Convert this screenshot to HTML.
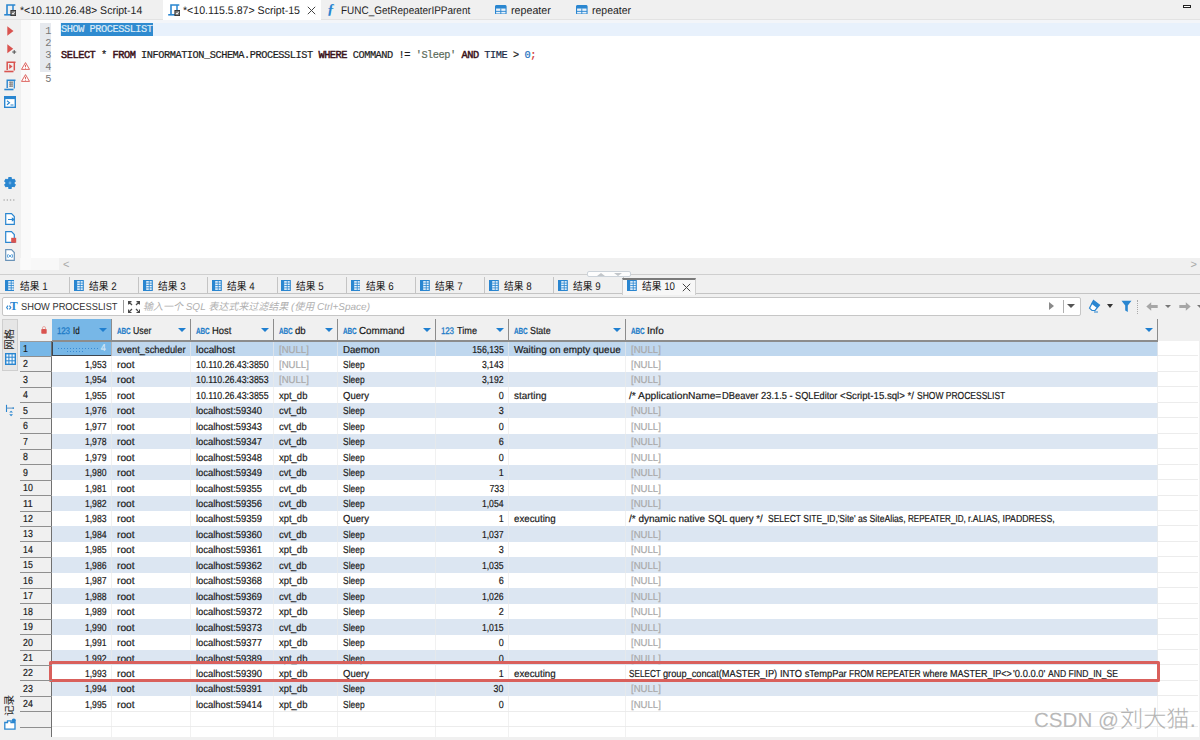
<!DOCTYPE html>
<html lang="zh"><head>
<meta charset="utf-8">
<title>DBeaver - SHOW PROCESSLIST</title>
<style>
*{box-sizing:border-box;margin:0;padding:0}
html,body{width:1200px;height:740px;overflow:hidden;background:#f0f0f0}
body{position:relative;font-family:"Liberation Sans","Noto Sans CJK SC",sans-serif;font-size:9.6px;color:#1a1a1a;letter-spacing:0}
.abs{position:absolute}
/* ---------- top editor tabs ---------- */
#tabs{position:absolute;left:0;top:0;width:1200px;height:20px;background:#f0f0f0;border-bottom:1px solid #e3e3e3}
#tabs .tab{position:absolute;top:0;height:20px;line-height:20px;font-size:11px;white-space:nowrap;color:#222}
#tabs .active{background:#fff;left:163px;width:158px}
#tabs .tab span.tx{position:absolute;top:0}
/* ---------- editor ---------- */
#editor{position:absolute;left:0;top:20px;width:1200px;height:238px;background:#fff}
#ltool{position:absolute;left:0;top:0;width:21px;height:255px;background:#f0f0f0}
#curline{position:absolute;left:60px;top:0;width:1140px;height:16px;background:#f3f5f9}
#curline2{position:absolute;left:60px;top:3px;width:1140px;height:13px;background:#e8f1fc}
#lngut{position:absolute;left:40px;top:3px;width:11px;height:49px;background:#e6e9ee}
.ln{position:absolute;left:40px;width:11px;text-align:right;font-family:"Liberation Mono",monospace;font-size:10.3px;letter-spacing:-0.5px;color:#787878;height:12px;line-height:12px}
.code{position:absolute;left:61px;height:12px;line-height:12px;-webkit-text-stroke:0.2px;font-family:"Liberation Mono",monospace;font-size:10.3px;letter-spacing:-0.46px;white-space:pre;color:#1c1c1c}
.kw{color:#3a1018;-webkit-text-stroke:0.45px #3a1018}
.kw2{color:#1a2a48}
.selbg{background:#2f8bd0;color:#dbeaf7;display:inline-block;height:12.7px}
.str{color:#5a6a5a}
.numc{color:#1b6fc0}
.semi{color:#d03030}
/* ---------- h-scroll + sash ---------- */
#hscroll{position:absolute;left:59.2px;top:258px;width:1141px;height:14px;background:#f0f0f0}
#hs-l{position:absolute;left:20.4px;top:258px;width:38.8px;height:12px;background:#f8f8f8}
.chev{position:absolute;font-size:11px;color:#a8a8a8;line-height:14px;letter-spacing:0}
#sashline{position:absolute;left:0;top:273.7px;width:1200px;height:1px;background:#cfcfcf}
/* ---------- result tabs ---------- */
#rtabs{position:absolute;left:0;top:275px;width:1200px;height:19.3px;background:#f0f0f0;border-bottom:1px solid #c4c4c4}
.rt{position:absolute;top:0.7px;height:19px;line-height:20px;font-size:11px;white-space:nowrap;color:#1a1a1a}
.rsep{position:absolute;top:2px;width:1px;height:15.5px;background:#c4c4c4}
/* ---------- filter bar ---------- */
#filter{position:absolute;left:2px;top:296.6px;width:1079px;height:19.4px;background:#fff;border:1px solid #c6c6c6;border-radius:2px}
/* ---------- grid ---------- */
#grid{position:absolute;left:0;top:0;width:1200px;height:740px;pointer-events:none}
.hc{position:absolute;top:318.5px;height:22.5px;background:#f0f0f0;border-right:1px solid #8c8c8c;border-bottom:1px solid #8c8c8c;line-height:24.2px;white-space:nowrap;font-size:10.2px;-webkit-text-stroke:0.2px}
.hc.sel{background:#77b7e7}
.hc .hn{position:absolute;left:21.8px;top:0}
.t123,.tabc{position:absolute;left:5.2px;top:0;color:#1f7cc8;font-size:9.6px;letter-spacing:-0.3px;-webkit-text-stroke:0.3px #1f7cc8}
.tabc{font-size:8.8px;font-weight:bold;letter-spacing:-0.2px;-webkit-text-stroke:0.2px #1f7cc8;top:0.3px}
.dd{position:absolute;right:4px;top:9.3px;width:0;height:0;border-left:4px solid transparent;border-right:4px solid transparent;border-top:4.6px solid #1f7fd0}
.row{position:absolute;left:0;width:1157.5px;height:15.45px}
.row.odd::before,.row.rsel::before{content:"";position:absolute;left:51.5px;top:0;width:1106px;height:15.45px;background:#dce6f2}
.row.rsel::before{background:#bfd7ee}
.rn{position:absolute;left:20px;width:31.5px;height:15.45px;padding-left:3px;line-height:16.5px;background:#f0f0f0;font-size:10.2px;-webkit-text-stroke:0.2px}
.rn::after{content:"";position:absolute;z-index:1;left:0;bottom:-0.6px;width:31.5px;height:1px;background:#8f8f8f}
.rsel .rn{background:#77b7e7}
.c{position:absolute;top:0.5px;height:15.45px;line-height:15.45px;padding:0 5px 0 5px;white-space:nowrap;font-size:10.2px;-webkit-text-stroke:0.2px}
.c.num{text-align:right;padding-right:5px}
.c.null{color:#a9a9a9}
.c.focus{top:0;background:#77b7e7;border:1.5px solid #3c4650;color:#d8e8f5;line-height:12px}
.vt{transform-origin:0 0;transform:rotate(-90deg);font-size:10.6px;line-height:11px;white-space:nowrap;color:#222;letter-spacing:0}
.dots{position:absolute;left:5px;top:6px;width:42px;height:1px;background:repeating-linear-gradient(90deg,#3a8bd4 0 1px,transparent 1px 3px)}
.dots::after{content:"";position:absolute;left:9px;top:2.5px;width:17px;height:1px;background:repeating-linear-gradient(90deg,#3a8bd4 0 1px,transparent 1px 3px)}
.ck{position:absolute;top:0;white-space:pre}
</style>
</head>
<body>
<div id="tabs">
<div class="tab active"></div>
<span class="tab tx" style="left: 19.6px; transform: scaleX(0.9583) rotate(0.03deg); transform-origin: 0px 50%;">*&lt;10.110.26.48&gt; Script-14</span>
<span class="tab tx" style="left: 183px; transform: scaleX(0.963) rotate(0.03deg); transform-origin: 0px 50%;">*&lt;10.115.5.87&gt; Script-15</span>
<span class="tab tx" style="left: 340.8px; transform: scaleX(0.907) rotate(0.03deg); transform-origin: 0px 50%;">FUNC_GetRepeaterIPParent</span>
<span class="tab tx" style="left: 510.7px; transform: scaleX(0.9711) rotate(0.03deg); transform-origin: 0px 50%;">repeater</span>
<span class="tab tx" style="left: 591.7px; transform: scaleX(0.9516) rotate(0.03deg); transform-origin: 0px 50%;">repeater</span>
<svg class="abs" style="left:4px;top:4px" width="12" height="12" viewBox="0 0 12 12"><path d="M3 10V1H11.3" stroke="#2a86d0" stroke-width="1.6" fill="none"></path><path d="M0.2 10.8H7" stroke="#2a86d0" stroke-width="1.6" fill="none"></path><path d="M9 1V6" stroke="#2a86d0" stroke-width="1.5" fill="none"></path><rect x="6.9" y="6.5" width="4.8" height="5.1" fill="#7a7a7a" stroke="#2e2e2e" stroke-width="0.9"></rect><path d="M8 9l1 1.2 1.7-2.4" stroke="#fff" stroke-width="0.9" fill="none"></path></svg>
<svg class="abs" style="left:168px;top:4px" width="12" height="12" viewBox="0 0 12 12"><path d="M3 10V1H11.3" stroke="#2a86d0" stroke-width="1.6" fill="none"></path><path d="M0.2 10.8H7" stroke="#2a86d0" stroke-width="1.6" fill="none"></path><path d="M9 1V6" stroke="#2a86d0" stroke-width="1.5" fill="none"></path><rect x="6.9" y="6.5" width="4.8" height="5.1" fill="#7a7a7a" stroke="#2e2e2e" stroke-width="0.9"></rect><path d="M8 9l1 1.2 1.7-2.4" stroke="#fff" stroke-width="0.9" fill="none"></path></svg>
<svg class="abs" style="left:306.5px;top:6px" width="9" height="9" viewBox="0 0 9 9"><path d="M0.8 0.8L8.2 8.2M8.2 0.8L0.8 8.2" stroke="#444" stroke-width="1" fill="none"></path></svg>
<span class="abs" style="left:327px;top:1px;font:italic bold 15px 'Liberation Serif',serif;color:#2a86d0;letter-spacing:0;line-height:16px">ƒ</span>
<svg class="abs" style="left:495.3px;top:4.5px" width="11.6" height="9.8" viewBox="0 0 13 10" preserveAspectRatio="none"><rect x="0.6" y="0.6" width="11.8" height="8.8" rx="1" fill="#e8f2fb" stroke="#2a86d0" stroke-width="1.2"></rect><rect x="0.6" y="0.6" width="11.8" height="3" fill="#2a86d0"></rect><path d="M6.5 3.5V9.4M0.6 6.5H12.4" stroke="#2a86d0" stroke-width="1"></path></svg>
<svg class="abs" style="left:576.3px;top:4.5px" width="11.6" height="9.8" viewBox="0 0 13 10" preserveAspectRatio="none"><rect x="0.6" y="0.6" width="11.8" height="8.8" rx="1" fill="#e8f2fb" stroke="#2a86d0" stroke-width="1.2"></rect><rect x="0.6" y="0.6" width="11.8" height="3" fill="#2a86d0"></rect><path d="M6.5 3.5V9.4M0.6 6.5H12.4" stroke="#2a86d0" stroke-width="1"></path></svg>
<div class="abs" style="left:1183px;top:4.8px;width:8px;height:3.2px;border:1px solid #222;background:#fff"></div>
</div>
<div id="editor">
<div id="curline"></div><div id="curline2"></div>
<div id="ltool"></div>
<div id="lngut"></div>
<div class="ln" style="top:4.5px">1</div>
<div class="ln" style="top:16.6px">2</div>
<div class="ln" style="top:28.7px">3</div>
<div class="ln" style="top:40.8px">4</div>
<div class="ln" style="top:52.9px">5</div>
<div class="code" style="top:3.2px"><span class="selbg">SHOW PROCESSLIST</span></div>
<div class="code" style="top:28.7px"><span class="kw">SELECT</span> * <span class="kw">FROM</span> INFORMATION_SCHEMA.PROCESSLIST <span class="kw">WHERE</span> COMMAND != <span class="str">'Sleep'</span> <span class="kw">AND</span> <span class="kw2">TIME</span> &gt; <span class="numc">0</span><span class="semi">;</span></div>
</div>
<div id="hs-l"></div><div id="hscroll"></div>
<span class="chev" style="left:63px;top:256.5px">&lt;</span>
<span class="chev" style="left:1190.5px;top:256.5px">&gt;</span>
<div id="sashline"></div>
<div id="rtabs">
<svg class="abs" style="left:4.6px;top:5px" width="9.8" height="11" viewBox="0 0 11 12" preserveAspectRatio="none"><rect x="0.6" y="0.6" width="9.8" height="10.8" fill="#eaf3fb" stroke="#2a86d0" stroke-width="1.2"></rect><rect x="0.6" y="0.6" width="3" height="10.8" fill="#2a86d0"></rect><path d="M7 0.6V11.4M3.6 3.4H10.4M3.6 6H10.4M3.6 8.6H10.4" stroke="#2a86d0" stroke-width="0.9"></path></svg>
<span class="rt" style="left: 19.5px; transform: scaleX(0.885) rotate(0.03deg); transform-origin: 0px 50%;">结果 1</span>
<div class="rsep" style="left:68.9px"></div>
<svg class="abs" style="left:73.8px;top:5px" width="9.8" height="11" viewBox="0 0 11 12" preserveAspectRatio="none"><rect x="0.6" y="0.6" width="9.8" height="10.8" fill="#eaf3fb" stroke="#2a86d0" stroke-width="1.2"></rect><rect x="0.6" y="0.6" width="3" height="10.8" fill="#2a86d0"></rect><path d="M7 0.6V11.4M3.6 3.4H10.4M3.6 6H10.4M3.6 8.6H10.4" stroke="#2a86d0" stroke-width="0.9"></path></svg>
<span class="rt" style="left: 88.7px; transform: scaleX(0.885) rotate(0.03deg); transform-origin: 0px 50%;">结果 2</span>
<div class="rsep" style="left:138.1px"></div>
<svg class="abs" style="left:143.0px;top:5px" width="9.8" height="11" viewBox="0 0 11 12" preserveAspectRatio="none"><rect x="0.6" y="0.6" width="9.8" height="10.8" fill="#eaf3fb" stroke="#2a86d0" stroke-width="1.2"></rect><rect x="0.6" y="0.6" width="3" height="10.8" fill="#2a86d0"></rect><path d="M7 0.6V11.4M3.6 3.4H10.4M3.6 6H10.4M3.6 8.6H10.4" stroke="#2a86d0" stroke-width="0.9"></path></svg>
<span class="rt" style="left: 157.9px; transform: scaleX(0.885) rotate(0.03deg); transform-origin: 0px 50%;">结果 3</span>
<div class="rsep" style="left:207.3px"></div>
<svg class="abs" style="left:212.20000000000002px;top:5px" width="9.8" height="11" viewBox="0 0 11 12" preserveAspectRatio="none"><rect x="0.6" y="0.6" width="9.8" height="10.8" fill="#eaf3fb" stroke="#2a86d0" stroke-width="1.2"></rect><rect x="0.6" y="0.6" width="3" height="10.8" fill="#2a86d0"></rect><path d="M7 0.6V11.4M3.6 3.4H10.4M3.6 6H10.4M3.6 8.6H10.4" stroke="#2a86d0" stroke-width="0.9"></path></svg>
<span class="rt" style="left: 227.1px; transform: scaleX(0.885) rotate(0.03deg); transform-origin: 0px 50%;">结果 4</span>
<div class="rsep" style="left:276.5px"></div>
<svg class="abs" style="left:281.40000000000003px;top:5px" width="9.8" height="11" viewBox="0 0 11 12" preserveAspectRatio="none"><rect x="0.6" y="0.6" width="9.8" height="10.8" fill="#eaf3fb" stroke="#2a86d0" stroke-width="1.2"></rect><rect x="0.6" y="0.6" width="3" height="10.8" fill="#2a86d0"></rect><path d="M7 0.6V11.4M3.6 3.4H10.4M3.6 6H10.4M3.6 8.6H10.4" stroke="#2a86d0" stroke-width="0.9"></path></svg>
<span class="rt" style="left: 296.3px; transform: scaleX(0.885) rotate(0.03deg); transform-origin: 0px 50%;">结果 5</span>
<div class="rsep" style="left:345.7px"></div>
<svg class="abs" style="left:350.6px;top:5px" width="9.8" height="11" viewBox="0 0 11 12" preserveAspectRatio="none"><rect x="0.6" y="0.6" width="9.8" height="10.8" fill="#eaf3fb" stroke="#2a86d0" stroke-width="1.2"></rect><rect x="0.6" y="0.6" width="3" height="10.8" fill="#2a86d0"></rect><path d="M7 0.6V11.4M3.6 3.4H10.4M3.6 6H10.4M3.6 8.6H10.4" stroke="#2a86d0" stroke-width="0.9"></path></svg>
<span class="rt" style="left: 365.5px; transform: scaleX(0.885) rotate(0.03deg); transform-origin: 0px 50%;">结果 6</span>
<div class="rsep" style="left:414.9px"></div>
<svg class="abs" style="left:419.80000000000007px;top:5px" width="9.8" height="11" viewBox="0 0 11 12" preserveAspectRatio="none"><rect x="0.6" y="0.6" width="9.8" height="10.8" fill="#eaf3fb" stroke="#2a86d0" stroke-width="1.2"></rect><rect x="0.6" y="0.6" width="3" height="10.8" fill="#2a86d0"></rect><path d="M7 0.6V11.4M3.6 3.4H10.4M3.6 6H10.4M3.6 8.6H10.4" stroke="#2a86d0" stroke-width="0.9"></path></svg>
<span class="rt" style="left: 434.7px; transform: scaleX(0.885) rotate(0.03deg); transform-origin: 0px 50%;">结果 7</span>
<div class="rsep" style="left:484.1px"></div>
<svg class="abs" style="left:489.00000000000006px;top:5px" width="9.8" height="11" viewBox="0 0 11 12" preserveAspectRatio="none"><rect x="0.6" y="0.6" width="9.8" height="10.8" fill="#eaf3fb" stroke="#2a86d0" stroke-width="1.2"></rect><rect x="0.6" y="0.6" width="3" height="10.8" fill="#2a86d0"></rect><path d="M7 0.6V11.4M3.6 3.4H10.4M3.6 6H10.4M3.6 8.6H10.4" stroke="#2a86d0" stroke-width="0.9"></path></svg>
<span class="rt" style="left: 503.9px; transform: scaleX(0.885) rotate(0.03deg); transform-origin: 0px 50%;">结果 8</span>
<div class="rsep" style="left:553.3000000000001px"></div>
<svg class="abs" style="left:558.2px;top:5px" width="9.8" height="11" viewBox="0 0 11 12" preserveAspectRatio="none"><rect x="0.6" y="0.6" width="9.8" height="10.8" fill="#eaf3fb" stroke="#2a86d0" stroke-width="1.2"></rect><rect x="0.6" y="0.6" width="3" height="10.8" fill="#2a86d0"></rect><path d="M7 0.6V11.4M3.6 3.4H10.4M3.6 6H10.4M3.6 8.6H10.4" stroke="#2a86d0" stroke-width="0.9"></path></svg>
<span class="rt" style="left: 573.1px; transform: scaleX(0.885) rotate(0.03deg); transform-origin: 0px 50%;">结果 9</span>
<div class="rsep" style="left:622.5000000000001px"></div>
<div class="abs" style="left:622.3000000000001px;top:2.5px;width:73.5px;height:17.5px;background:#f7f7f7;border:1px solid #cfcfcf;border-top:2px solid #7a7a7a;border-bottom:none"></div>
<svg class="abs" style="left:627.4000000000001px;top:5px" width="9.8" height="11" viewBox="0 0 11 12" preserveAspectRatio="none"><rect x="0.6" y="0.6" width="9.8" height="10.8" fill="#eaf3fb" stroke="#2a86d0" stroke-width="1.2"></rect><rect x="0.6" y="0.6" width="3" height="10.8" fill="#2a86d0"></rect><path d="M7 0.6V11.4M3.6 3.4H10.4M3.6 6H10.4M3.6 8.6H10.4" stroke="#2a86d0" stroke-width="0.9"></path></svg>
<span class="rt" style="left: 642.3px; transform: scaleX(0.8848) rotate(0.03deg); transform-origin: 0px 50%;">结果 10</span>
<svg class="abs" style="left:682px;top:7.5px" width="9" height="9" viewBox="0 0 9 9"><path d="M0.8 0.8L8.2 8.2M8.2 0.8L0.8 8.2" stroke="#444" stroke-width="1" fill="none"></path></svg>
</div>
<div class="abs" style="left:586.7px;top:271px;width:44px;height:6px;background:#fdfdfd;border:1px solid #ccd3da;border-radius:2px"></div>
<svg class="abs" style="left:595px;top:272px" width="30" height="5" viewBox="0 0 30 5"><path d="M2 4L6 1L10 4ZM19 1L23 4L27 1Z" fill="#c2c6ca"></path></svg>
<div id="filter"></div>
<svg class="abs" style="left:5.6px;top:304.8px" width="6" height="5" viewBox="0 0 6 5"><path d="M2 0.6L0.6 2.5L2 4.4M3.4 0.6L4.8 2.5L3.4 4.4" stroke="#2a86d0" stroke-width="1.1" fill="none"></path></svg>
<span class="abs" style="left:10.3px;top:298.6px;font:bold 12.5px 'Liberation Serif',serif;color:#2a86d0;line-height:15px;letter-spacing:0;transform:scaleX(0.92);transform-origin:0 0">T</span>
<span class="abs ftxt" style="left: 20.5px; top: 297.5px; line-height: 18px; font-size: 10.2px; color: rgb(51, 51, 51); white-space: nowrap; transform: scaleX(0.9116) rotate(0.03deg); transform-origin: 0px 50%;">SHOW PROCESSLIST</span>
<div class="abs" style="left:123px;top:300px;width:1px;height:13px;background:#9a9a9a"></div>
<svg class="abs" style="left:127.5px;top:300.5px" width="12" height="12" viewBox="0 0 12 12"><path d="M0.5 3.5V0.5H3.5M8.5 0.5H11.5V3.5M11.5 8.5V11.5H8.5M3.5 11.5H0.5V8.5M0.5 0.5L4 4M11.5 0.5L8 4M11.5 11.5L8 8M0.5 11.5L4 8" stroke="#4a4a4a" stroke-width="1.25" fill="none"></path></svg>
<span class="abs" style="left: 143px; top: 297.5px; line-height: 18px; font-size: 10px; font-style: italic; color: rgb(176, 176, 176); white-space: nowrap; transform: scaleX(0.9984) rotate(0.03deg); transform-origin: 0px 50%;">输入一个 SQL 表达式来过滤结果 (使用 Ctrl+Space)</span>
<div class="abs" style="left:1049px;top:301.5px;width:0;height:0;border-top:4.5px solid transparent;border-bottom:4.5px solid transparent;border-left:5px solid #8a8a8a"></div>
<div class="abs" style="left:1062.5px;top:300px;width:1px;height:13px;background:#b0b0b0"></div>
<div class="abs" style="left:1066.5px;top:304px;width:0;height:0;border-left:4px solid transparent;border-right:4px solid transparent;border-top:4.5px solid #555"></div>
<svg class="abs" style="left:1088px;top:299px" width="13" height="14" viewBox="0 0 13 14"><path d="M5.5 1.5L11.5 6L7 11.5H4L1.5 9.2Z" fill="#fff" stroke="#2a86d0" stroke-width="1.2"></path><path d="M5.5 1.5L11.5 6L9 9L3.2 4.5Z" fill="#2a86d0"></path><path d="M6 13H10" stroke="#2a86d0" stroke-width="1"></path></svg>
<div class="abs" style="left:1107px;top:304px;width:0;height:0;border-left:3.5px solid transparent;border-right:3.5px solid transparent;border-top:4px solid #333"></div>
<svg class="abs" style="left:1120.5px;top:299.5px" width="11" height="13" viewBox="0 0 11 13"><path d="M0.5 0.8H10.5L6.8 5.5V12L4.2 10.5V5.5Z" fill="#2a86d0"></path></svg>
<div class="abs" style="left:1136.5px;top:300px;width:1px;height:14px;border-left:1px dotted #aaa"></div>
<svg class="abs" style="left:1146px;top:301.5px" width="12" height="9" viewBox="0 0 12 9"><path d="M0.3 4.5L5.2 0.3V3H11.7V6H5.2V8.7Z" fill="#a6a6a6"></path></svg>
<div class="abs" style="left:1164.5px;top:304.5px;width:0;height:0;border-left:3px solid transparent;border-right:3px solid transparent;border-top:3.5px solid #777"></div>
<svg class="abs" style="left:1179px;top:301.5px" width="12" height="9" viewBox="0 0 12 9"><path d="M11.7 4.5L6.8 0.3V3H0.3V6H6.8V8.7Z" fill="#a6a6a6"></path></svg>
<div class="abs" style="left:1196.5px;top:304.5px;width:0;height:0;border-left:3px solid transparent;border-right:3px solid transparent;border-top:3.5px solid #777"></div>
<div id="grid">
<div class="abs" style="left:20px;top:318.5px;width:1180px;height:23px;background:#f0f0f0"></div>
<div class="abs" style="left:51.5px;top:340.5px;width:1147px;height:396.5px;background:#fff"></div>
<div class="abs" style="left:20px;top:340.5px;width:31.5px;height:396.5px;background:#f0f0f0"></div>
<div class="hc sel" style="left:51.5px;width:60.0px"><span class="t123" style="transform: scaleX(0.8339) rotate(0.03deg); transform-origin: 0px 50%;">123</span><span class="hn" style="transform: scaleX(0.7882) rotate(0.03deg); transform-origin: 0px 50%;">Id</span><i class="dd"></i></div>
<div class="hc" style="left:111.5px;width:79.0px"><span class="tabc" style="transform: scaleX(0.7255) rotate(0.03deg); transform-origin: 0px 50%;">ABC</span><span class="hn" style="transform: scaleX(0.8552) rotate(0.03deg); transform-origin: 0px 50%;">User</span><i class="dd"></i></div>
<div class="hc" style="left:190.5px;width:83.0px"><span class="tabc" style="transform: scaleX(0.7255) rotate(0.03deg); transform-origin: 0px 50%;">ABC</span><span class="hn" style="transform: scaleX(0.9259) rotate(0.03deg); transform-origin: 0px 50%;">Host</span><i class="dd"></i></div>
<div class="hc" style="left:273.5px;width:64.0px"><span class="tabc" style="transform: scaleX(0.7255) rotate(0.03deg); transform-origin: 0px 50%;">ABC</span><span class="hn" style="transform: scaleX(0.9433) rotate(0.03deg); transform-origin: 0px 50%;">db</span><i class="dd"></i></div>
<div class="hc" style="left:337.5px;width:98.0px"><span class="tabc" style="transform: scaleX(0.7255) rotate(0.03deg); transform-origin: 0px 50%;">ABC</span><span class="hn" style="transform: scaleX(0.9681) rotate(0.03deg); transform-origin: 0px 50%;">Command</span><i class="dd"></i></div>
<div class="hc" style="left:435.5px;width:73.0px"><span class="t123" style="transform: scaleX(0.8339) rotate(0.03deg); transform-origin: 0px 50%;">123</span><span class="hn" style="transform: scaleX(0.8982) rotate(0.03deg); transform-origin: 0px 50%;">Time</span><i class="dd"></i></div>
<div class="hc" style="left:508.5px;width:117.0px"><span class="tabc" style="transform: scaleX(0.7255) rotate(0.03deg); transform-origin: 0px 50%;">ABC</span><span class="hn" style="transform: scaleX(0.8699) rotate(0.03deg); transform-origin: 0px 50%;">State</span><i class="dd"></i></div>
<div class="hc" style="left:625.5px;width:532.0px"><span class="tabc" style="transform: scaleX(0.7255) rotate(0.03deg); transform-origin: 0px 50%;">ABC</span><span class="hn" style="transform: scaleX(0.9824) rotate(0.03deg); transform-origin: 0px 50%;">Info</span><i class="dd"></i></div>
<div class="row rsel" style="top:341.0px">
<span class="rn"><span style="display: inline-block; transform: scaleX(0.8639) rotate(0.03deg); transform-origin: 0px 50%;">1</span></span>
<span class="c num focus" style="left:51.5px;width:60.0px"><i class="dots"></i><span style="display: inline-block; transform: scaleX(0.8815) rotate(0.03deg); transform-origin: 100% 50%;">4</span></span>
<span class="c" style="left:111.5px;width:79.0px"><span style="display: inline-block; transform: scaleX(0.9162) rotate(0.03deg); transform-origin: 0px 50%;">event_scheduler</span></span>
<span class="c" style="left:190.5px;width:83.0px"><span style="display: inline-block; transform: scaleX(0.9697) rotate(0.03deg); transform-origin: 0px 50%;">localhost</span></span>
<span class="c null" style="left:273.5px;width:64.0px"><span style="display: inline-block; transform: scaleX(0.9395) rotate(0.03deg); transform-origin: 0px 50%;">[NULL]</span></span>
<span class="c" style="left:337.5px;width:98.0px"><span style="display: inline-block; transform: scaleX(0.9503) rotate(0.03deg); transform-origin: 0px 50%;">Daemon</span></span>
<span class="c num" style="left:435.5px;width:73.0px"><span style="display: inline-block; transform: scaleX(0.858) rotate(0.03deg); transform-origin: 100% 50%;">156,135</span></span>
<span class="c" style="left:508.5px;width:117.0px"><span style="display: inline-block; transform: scaleX(0.9744) rotate(0.03deg); transform-origin: 0px 50%;">Waiting on empty queue</span></span>
<span class="c null" style="left:625.5px;width:532.0px"><span style="display: inline-block; transform: scaleX(0.9395) rotate(0.03deg); transform-origin: 0px 50%;">[NULL]</span></span>
</div>
<div class="row" style="top:356.45px">
<span class="rn"><span style="display: inline-block; transform: scaleX(0.8639) rotate(0.03deg); transform-origin: 0px 50%;">2</span></span>
<span class="c num" style="left:51.5px;width:60.0px"><span style="display: inline-block; transform: scaleX(0.8471) rotate(0.03deg); transform-origin: 100% 50%;">1,953</span></span>
<span class="c" style="left:111.5px;width:79.0px"><span style="display: inline-block; transform: scaleX(0.9964) rotate(0.03deg); transform-origin: 0px 50%;">root</span></span>
<span class="c" style="left:190.5px;width:83.0px"><span style="display: inline-block; transform: scaleX(0.8619) rotate(0.03deg); transform-origin: 0px 50%;">10.110.26.43:3850</span></span>
<span class="c null" style="left:273.5px;width:64.0px"><span style="display: inline-block; transform: scaleX(0.9395) rotate(0.03deg); transform-origin: 0px 50%;">[NULL]</span></span>
<span class="c" style="left:337.5px;width:98.0px"><span style="display: inline-block; transform: scaleX(0.8288) rotate(0.03deg); transform-origin: 0px 50%;">Sleep</span></span>
<span class="c num" style="left:435.5px;width:73.0px"><span style="display: inline-block; transform: scaleX(0.8471) rotate(0.03deg); transform-origin: 100% 50%;">3,143</span></span>
<span class="c" style="left:508.5px;width:117.0px"></span>
<span class="c null" style="left:625.5px;width:532.0px"><span style="display: inline-block; transform: scaleX(0.9395) rotate(0.03deg); transform-origin: 0px 50%;">[NULL]</span></span>
</div>
<div class="row odd" style="top:371.9px">
<span class="rn"><span style="display: inline-block; transform: scaleX(0.8639) rotate(0.03deg); transform-origin: 0px 50%;">3</span></span>
<span class="c num" style="left:51.5px;width:60.0px"><span style="display: inline-block; transform: scaleX(0.8471) rotate(0.03deg); transform-origin: 100% 50%;">1,954</span></span>
<span class="c" style="left:111.5px;width:79.0px"><span style="display: inline-block; transform: scaleX(0.9964) rotate(0.03deg); transform-origin: 0px 50%;">root</span></span>
<span class="c" style="left:190.5px;width:83.0px"><span style="display: inline-block; transform: scaleX(0.8619) rotate(0.03deg); transform-origin: 0px 50%;">10.110.26.43:3853</span></span>
<span class="c null" style="left:273.5px;width:64.0px"><span style="display: inline-block; transform: scaleX(0.9395) rotate(0.03deg); transform-origin: 0px 50%;">[NULL]</span></span>
<span class="c" style="left:337.5px;width:98.0px"><span style="display: inline-block; transform: scaleX(0.8288) rotate(0.03deg); transform-origin: 0px 50%;">Sleep</span></span>
<span class="c num" style="left:435.5px;width:73.0px"><span style="display: inline-block; transform: scaleX(0.8471) rotate(0.03deg); transform-origin: 100% 50%;">3,192</span></span>
<span class="c" style="left:508.5px;width:117.0px"></span>
<span class="c null" style="left:625.5px;width:532.0px"><span style="display: inline-block; transform: scaleX(0.9395) rotate(0.03deg); transform-origin: 0px 50%;">[NULL]</span></span>
</div>
<div class="row" style="top:387.35px">
<span class="rn"><span style="display: inline-block; transform: scaleX(0.8639) rotate(0.03deg); transform-origin: 0px 50%;">4</span></span>
<span class="c num" style="left:51.5px;width:60.0px"><span style="display: inline-block; transform: scaleX(0.8471) rotate(0.03deg); transform-origin: 100% 50%;">1,955</span></span>
<span class="c" style="left:111.5px;width:79.0px"><span style="display: inline-block; transform: scaleX(0.9964) rotate(0.03deg); transform-origin: 0px 50%;">root</span></span>
<span class="c" style="left:190.5px;width:83.0px"><span style="display: inline-block; transform: scaleX(0.8619) rotate(0.03deg); transform-origin: 0px 50%;">10.110.26.43:3855</span></span>
<span class="c" style="left:273.5px;width:64.0px"><span style="display: inline-block; transform: scaleX(0.9283) rotate(0.03deg); transform-origin: 0px 50%;">xpt_db</span></span>
<span class="c" style="left:337.5px;width:98.0px"><span style="display: inline-block; transform: scaleX(0.9369) rotate(0.03deg); transform-origin: 0px 50%;">Query</span></span>
<span class="c num" style="left:435.5px;width:73.0px"><span style="display: inline-block; transform: scaleX(0.8815) rotate(0.03deg); transform-origin: 100% 50%;">0</span></span>
<span class="c" style="left:508.5px;width:117.0px"><span style="display: inline-block; transform: scaleX(0.9694) rotate(0.03deg); transform-origin: 0px 50%;">starting</span></span>
<span class="c i4" style="left:625.5px;width:532.0px"><span class="ck" style="left: 3.9px; transform: scaleX(1.0029) rotate(0.03deg); transform-origin: 0px 50%;">/* ApplicationName=</span><span class="ck" style="left: 96.2px; transform: scaleX(0.918) rotate(0.03deg); transform-origin: 0px 50%;">DBeaver 23.1.5 - </span><span class="ck" style="left: 169.5px; transform: scaleX(0.9028) rotate(0.03deg); transform-origin: 0px 50%;">SQLEditor </span><span class="ck" style="left: 214.5px; transform: scaleX(0.9471) rotate(0.03deg); transform-origin: 0px 50%;">&lt;Script-15.sql&gt; */ </span><span class="ck" style="left: 291.2px; transform: scaleX(0.8341) rotate(0.03deg); transform-origin: 0px 50%;">SHOW PROCESSLIST</span></span>
</div>
<div class="row odd" style="top:402.8px">
<span class="rn"><span style="display: inline-block; transform: scaleX(0.8639) rotate(0.03deg); transform-origin: 0px 50%;">5</span></span>
<span class="c num" style="left:51.5px;width:60.0px"><span style="display: inline-block; transform: scaleX(0.8471) rotate(0.03deg); transform-origin: 100% 50%;">1,976</span></span>
<span class="c" style="left:111.5px;width:79.0px"><span style="display: inline-block; transform: scaleX(0.9964) rotate(0.03deg); transform-origin: 0px 50%;">root</span></span>
<span class="c" style="left:190.5px;width:83.0px"><span style="display: inline-block; transform: scaleX(0.9247) rotate(0.03deg); transform-origin: 0px 50%;">localhost:59340</span></span>
<span class="c" style="left:273.5px;width:64.0px"><span style="display: inline-block; transform: scaleX(0.9229) rotate(0.03deg); transform-origin: 0px 50%;">cvt_db</span></span>
<span class="c" style="left:337.5px;width:98.0px"><span style="display: inline-block; transform: scaleX(0.8288) rotate(0.03deg); transform-origin: 0px 50%;">Sleep</span></span>
<span class="c num" style="left:435.5px;width:73.0px"><span style="display: inline-block; transform: scaleX(0.8815) rotate(0.03deg); transform-origin: 100% 50%;">3</span></span>
<span class="c" style="left:508.5px;width:117.0px"></span>
<span class="c null" style="left:625.5px;width:532.0px"><span style="display: inline-block; transform: scaleX(0.9395) rotate(0.03deg); transform-origin: 0px 50%;">[NULL]</span></span>
</div>
<div class="row" style="top:418.25px">
<span class="rn"><span style="display: inline-block; transform: scaleX(0.8639) rotate(0.03deg); transform-origin: 0px 50%;">6</span></span>
<span class="c num" style="left:51.5px;width:60.0px"><span style="display: inline-block; transform: scaleX(0.8471) rotate(0.03deg); transform-origin: 100% 50%;">1,977</span></span>
<span class="c" style="left:111.5px;width:79.0px"><span style="display: inline-block; transform: scaleX(0.9964) rotate(0.03deg); transform-origin: 0px 50%;">root</span></span>
<span class="c" style="left:190.5px;width:83.0px"><span style="display: inline-block; transform: scaleX(0.9247) rotate(0.03deg); transform-origin: 0px 50%;">localhost:59343</span></span>
<span class="c" style="left:273.5px;width:64.0px"><span style="display: inline-block; transform: scaleX(0.9229) rotate(0.03deg); transform-origin: 0px 50%;">cvt_db</span></span>
<span class="c" style="left:337.5px;width:98.0px"><span style="display: inline-block; transform: scaleX(0.8288) rotate(0.03deg); transform-origin: 0px 50%;">Sleep</span></span>
<span class="c num" style="left:435.5px;width:73.0px"><span style="display: inline-block; transform: scaleX(0.8815) rotate(0.03deg); transform-origin: 100% 50%;">0</span></span>
<span class="c" style="left:508.5px;width:117.0px"></span>
<span class="c null" style="left:625.5px;width:532.0px"><span style="display: inline-block; transform: scaleX(0.9395) rotate(0.03deg); transform-origin: 0px 50%;">[NULL]</span></span>
</div>
<div class="row odd" style="top:433.7px">
<span class="rn"><span style="display: inline-block; transform: scaleX(0.8639) rotate(0.03deg); transform-origin: 0px 50%;">7</span></span>
<span class="c num" style="left:51.5px;width:60.0px"><span style="display: inline-block; transform: scaleX(0.8471) rotate(0.03deg); transform-origin: 100% 50%;">1,978</span></span>
<span class="c" style="left:111.5px;width:79.0px"><span style="display: inline-block; transform: scaleX(0.9964) rotate(0.03deg); transform-origin: 0px 50%;">root</span></span>
<span class="c" style="left:190.5px;width:83.0px"><span style="display: inline-block; transform: scaleX(0.9247) rotate(0.03deg); transform-origin: 0px 50%;">localhost:59347</span></span>
<span class="c" style="left:273.5px;width:64.0px"><span style="display: inline-block; transform: scaleX(0.9229) rotate(0.03deg); transform-origin: 0px 50%;">cvt_db</span></span>
<span class="c" style="left:337.5px;width:98.0px"><span style="display: inline-block; transform: scaleX(0.8288) rotate(0.03deg); transform-origin: 0px 50%;">Sleep</span></span>
<span class="c num" style="left:435.5px;width:73.0px"><span style="display: inline-block; transform: scaleX(0.8815) rotate(0.03deg); transform-origin: 100% 50%;">6</span></span>
<span class="c" style="left:508.5px;width:117.0px"></span>
<span class="c null" style="left:625.5px;width:532.0px"><span style="display: inline-block; transform: scaleX(0.9395) rotate(0.03deg); transform-origin: 0px 50%;">[NULL]</span></span>
</div>
<div class="row" style="top:449.15px">
<span class="rn"><span style="display: inline-block; transform: scaleX(0.8639) rotate(0.03deg); transform-origin: 0px 50%;">8</span></span>
<span class="c num" style="left:51.5px;width:60.0px"><span style="display: inline-block; transform: scaleX(0.8471) rotate(0.03deg); transform-origin: 100% 50%;">1,979</span></span>
<span class="c" style="left:111.5px;width:79.0px"><span style="display: inline-block; transform: scaleX(0.9964) rotate(0.03deg); transform-origin: 0px 50%;">root</span></span>
<span class="c" style="left:190.5px;width:83.0px"><span style="display: inline-block; transform: scaleX(0.9247) rotate(0.03deg); transform-origin: 0px 50%;">localhost:59348</span></span>
<span class="c" style="left:273.5px;width:64.0px"><span style="display: inline-block; transform: scaleX(0.9283) rotate(0.03deg); transform-origin: 0px 50%;">xpt_db</span></span>
<span class="c" style="left:337.5px;width:98.0px"><span style="display: inline-block; transform: scaleX(0.8288) rotate(0.03deg); transform-origin: 0px 50%;">Sleep</span></span>
<span class="c num" style="left:435.5px;width:73.0px"><span style="display: inline-block; transform: scaleX(0.8815) rotate(0.03deg); transform-origin: 100% 50%;">0</span></span>
<span class="c" style="left:508.5px;width:117.0px"></span>
<span class="c null" style="left:625.5px;width:532.0px"><span style="display: inline-block; transform: scaleX(0.9395) rotate(0.03deg); transform-origin: 0px 50%;">[NULL]</span></span>
</div>
<div class="row odd" style="top:464.6px">
<span class="rn"><span style="display: inline-block; transform: scaleX(0.8639) rotate(0.03deg); transform-origin: 0px 50%;">9</span></span>
<span class="c num" style="left:51.5px;width:60.0px"><span style="display: inline-block; transform: scaleX(0.8471) rotate(0.03deg); transform-origin: 100% 50%;">1,980</span></span>
<span class="c" style="left:111.5px;width:79.0px"><span style="display: inline-block; transform: scaleX(0.9964) rotate(0.03deg); transform-origin: 0px 50%;">root</span></span>
<span class="c" style="left:190.5px;width:83.0px"><span style="display: inline-block; transform: scaleX(0.9247) rotate(0.03deg); transform-origin: 0px 50%;">localhost:59349</span></span>
<span class="c" style="left:273.5px;width:64.0px"><span style="display: inline-block; transform: scaleX(0.9229) rotate(0.03deg); transform-origin: 0px 50%;">cvt_db</span></span>
<span class="c" style="left:337.5px;width:98.0px"><span style="display: inline-block; transform: scaleX(0.8288) rotate(0.03deg); transform-origin: 0px 50%;">Sleep</span></span>
<span class="c num" style="left:435.5px;width:73.0px"><span style="display: inline-block; transform: scaleX(0.8815) rotate(0.03deg); transform-origin: 100% 50%;">1</span></span>
<span class="c" style="left:508.5px;width:117.0px"></span>
<span class="c null" style="left:625.5px;width:532.0px"><span style="display: inline-block; transform: scaleX(0.9395) rotate(0.03deg); transform-origin: 0px 50%;">[NULL]</span></span>
</div>
<div class="row" style="top:480.04999999999995px">
<span class="rn"><span style="display: inline-block; transform: scaleX(0.8639) rotate(0.03deg); transform-origin: 0px 50%;">10</span></span>
<span class="c num" style="left:51.5px;width:60.0px"><span style="display: inline-block; transform: scaleX(0.8471) rotate(0.03deg); transform-origin: 100% 50%;">1,981</span></span>
<span class="c" style="left:111.5px;width:79.0px"><span style="display: inline-block; transform: scaleX(0.9964) rotate(0.03deg); transform-origin: 0px 50%;">root</span></span>
<span class="c" style="left:190.5px;width:83.0px"><span style="display: inline-block; transform: scaleX(0.9247) rotate(0.03deg); transform-origin: 0px 50%;">localhost:59355</span></span>
<span class="c" style="left:273.5px;width:64.0px"><span style="display: inline-block; transform: scaleX(0.9229) rotate(0.03deg); transform-origin: 0px 50%;">cvt_db</span></span>
<span class="c" style="left:337.5px;width:98.0px"><span style="display: inline-block; transform: scaleX(0.8288) rotate(0.03deg); transform-origin: 0px 50%;">Sleep</span></span>
<span class="c num" style="left:435.5px;width:73.0px"><span style="display: inline-block; transform: scaleX(0.8588) rotate(0.03deg); transform-origin: 100% 50%;">733</span></span>
<span class="c" style="left:508.5px;width:117.0px"></span>
<span class="c null" style="left:625.5px;width:532.0px"><span style="display: inline-block; transform: scaleX(0.9395) rotate(0.03deg); transform-origin: 0px 50%;">[NULL]</span></span>
</div>
<div class="row odd" style="top:495.5px">
<span class="rn"><span style="display: inline-block; transform: scaleX(0.9264) rotate(0.03deg); transform-origin: 0px 50%;">11</span></span>
<span class="c num" style="left:51.5px;width:60.0px"><span style="display: inline-block; transform: scaleX(0.8471) rotate(0.03deg); transform-origin: 100% 50%;">1,982</span></span>
<span class="c" style="left:111.5px;width:79.0px"><span style="display: inline-block; transform: scaleX(0.9964) rotate(0.03deg); transform-origin: 0px 50%;">root</span></span>
<span class="c" style="left:190.5px;width:83.0px"><span style="display: inline-block; transform: scaleX(0.9247) rotate(0.03deg); transform-origin: 0px 50%;">localhost:59356</span></span>
<span class="c" style="left:273.5px;width:64.0px"><span style="display: inline-block; transform: scaleX(0.9229) rotate(0.03deg); transform-origin: 0px 50%;">cvt_db</span></span>
<span class="c" style="left:337.5px;width:98.0px"><span style="display: inline-block; transform: scaleX(0.8288) rotate(0.03deg); transform-origin: 0px 50%;">Sleep</span></span>
<span class="c num" style="left:435.5px;width:73.0px"><span style="display: inline-block; transform: scaleX(0.8471) rotate(0.03deg); transform-origin: 100% 50%;">1,054</span></span>
<span class="c" style="left:508.5px;width:117.0px"></span>
<span class="c null" style="left:625.5px;width:532.0px"><span style="display: inline-block; transform: scaleX(0.9395) rotate(0.03deg); transform-origin: 0px 50%;">[NULL]</span></span>
</div>
<div class="row" style="top:510.95px">
<span class="rn"><span style="display: inline-block; transform: scaleX(0.8639) rotate(0.03deg); transform-origin: 0px 50%;">12</span></span>
<span class="c num" style="left:51.5px;width:60.0px"><span style="display: inline-block; transform: scaleX(0.8471) rotate(0.03deg); transform-origin: 100% 50%;">1,983</span></span>
<span class="c" style="left:111.5px;width:79.0px"><span style="display: inline-block; transform: scaleX(0.9964) rotate(0.03deg); transform-origin: 0px 50%;">root</span></span>
<span class="c" style="left:190.5px;width:83.0px"><span style="display: inline-block; transform: scaleX(0.9247) rotate(0.03deg); transform-origin: 0px 50%;">localhost:59359</span></span>
<span class="c" style="left:273.5px;width:64.0px"><span style="display: inline-block; transform: scaleX(0.9283) rotate(0.03deg); transform-origin: 0px 50%;">xpt_db</span></span>
<span class="c" style="left:337.5px;width:98.0px"><span style="display: inline-block; transform: scaleX(0.9369) rotate(0.03deg); transform-origin: 0px 50%;">Query</span></span>
<span class="c num" style="left:435.5px;width:73.0px"><span style="display: inline-block; transform: scaleX(0.8815) rotate(0.03deg); transform-origin: 100% 50%;">1</span></span>
<span class="c" style="left:508.5px;width:117.0px"><span style="display: inline-block; transform: scaleX(0.9559) rotate(0.03deg); transform-origin: 0px 50%;">executing</span></span>
<span class="c i12" style="left:625.5px;width:532.0px"><span class="ck" style="left: 3.9px; transform: scaleX(0.9813) rotate(0.03deg); transform-origin: 0px 50%;">/* dynamic native </span><span class="ck" style="left: 82.8px; transform: scaleX(0.9433) rotate(0.03deg); transform-origin: 0px 50%;">SQL query */  </span><span class="ck" style="left: 142.8px; transform: scaleX(0.8342) rotate(0.03deg); transform-origin: 0px 50%;">SELECT SITE_ID,'Site' </span><span class="ck" style="left: 232.8px; transform: scaleX(0.849) rotate(0.03deg); transform-origin: 0px 50%;">as SiteAlias, </span><span class="ck" style="left: 282.8px; transform: scaleX(0.7929) rotate(0.03deg); transform-origin: 0px 50%;">REPEATER_ID, </span><span class="ck" style="left: 342.8px; transform: scaleX(0.8571) rotate(0.03deg); transform-origin: 0px 50%;">r.ALIAS, IPADDRESS,</span></span>
</div>
<div class="row odd" style="top:526.4px">
<span class="rn"><span style="display: inline-block; transform: scaleX(0.8639) rotate(0.03deg); transform-origin: 0px 50%;">13</span></span>
<span class="c num" style="left:51.5px;width:60.0px"><span style="display: inline-block; transform: scaleX(0.8471) rotate(0.03deg); transform-origin: 100% 50%;">1,984</span></span>
<span class="c" style="left:111.5px;width:79.0px"><span style="display: inline-block; transform: scaleX(0.9964) rotate(0.03deg); transform-origin: 0px 50%;">root</span></span>
<span class="c" style="left:190.5px;width:83.0px"><span style="display: inline-block; transform: scaleX(0.9247) rotate(0.03deg); transform-origin: 0px 50%;">localhost:59360</span></span>
<span class="c" style="left:273.5px;width:64.0px"><span style="display: inline-block; transform: scaleX(0.9229) rotate(0.03deg); transform-origin: 0px 50%;">cvt_db</span></span>
<span class="c" style="left:337.5px;width:98.0px"><span style="display: inline-block; transform: scaleX(0.8288) rotate(0.03deg); transform-origin: 0px 50%;">Sleep</span></span>
<span class="c num" style="left:435.5px;width:73.0px"><span style="display: inline-block; transform: scaleX(0.8471) rotate(0.03deg); transform-origin: 100% 50%;">1,037</span></span>
<span class="c" style="left:508.5px;width:117.0px"></span>
<span class="c null" style="left:625.5px;width:532.0px"><span style="display: inline-block; transform: scaleX(0.9395) rotate(0.03deg); transform-origin: 0px 50%;">[NULL]</span></span>
</div>
<div class="row" style="top:541.85px">
<span class="rn"><span style="display: inline-block; transform: scaleX(0.8639) rotate(0.03deg); transform-origin: 0px 50%;">14</span></span>
<span class="c num" style="left:51.5px;width:60.0px"><span style="display: inline-block; transform: scaleX(0.8471) rotate(0.03deg); transform-origin: 100% 50%;">1,985</span></span>
<span class="c" style="left:111.5px;width:79.0px"><span style="display: inline-block; transform: scaleX(0.9964) rotate(0.03deg); transform-origin: 0px 50%;">root</span></span>
<span class="c" style="left:190.5px;width:83.0px"><span style="display: inline-block; transform: scaleX(0.9247) rotate(0.03deg); transform-origin: 0px 50%;">localhost:59361</span></span>
<span class="c" style="left:273.5px;width:64.0px"><span style="display: inline-block; transform: scaleX(0.9283) rotate(0.03deg); transform-origin: 0px 50%;">xpt_db</span></span>
<span class="c" style="left:337.5px;width:98.0px"><span style="display: inline-block; transform: scaleX(0.8288) rotate(0.03deg); transform-origin: 0px 50%;">Sleep</span></span>
<span class="c num" style="left:435.5px;width:73.0px"><span style="display: inline-block; transform: scaleX(0.8815) rotate(0.03deg); transform-origin: 100% 50%;">3</span></span>
<span class="c" style="left:508.5px;width:117.0px"></span>
<span class="c null" style="left:625.5px;width:532.0px"><span style="display: inline-block; transform: scaleX(0.9395) rotate(0.03deg); transform-origin: 0px 50%;">[NULL]</span></span>
</div>
<div class="row odd" style="top:557.3px">
<span class="rn"><span style="display: inline-block; transform: scaleX(0.8639) rotate(0.03deg); transform-origin: 0px 50%;">15</span></span>
<span class="c num" style="left:51.5px;width:60.0px"><span style="display: inline-block; transform: scaleX(0.8471) rotate(0.03deg); transform-origin: 100% 50%;">1,986</span></span>
<span class="c" style="left:111.5px;width:79.0px"><span style="display: inline-block; transform: scaleX(0.9964) rotate(0.03deg); transform-origin: 0px 50%;">root</span></span>
<span class="c" style="left:190.5px;width:83.0px"><span style="display: inline-block; transform: scaleX(0.9247) rotate(0.03deg); transform-origin: 0px 50%;">localhost:59362</span></span>
<span class="c" style="left:273.5px;width:64.0px"><span style="display: inline-block; transform: scaleX(0.9229) rotate(0.03deg); transform-origin: 0px 50%;">cvt_db</span></span>
<span class="c" style="left:337.5px;width:98.0px"><span style="display: inline-block; transform: scaleX(0.8288) rotate(0.03deg); transform-origin: 0px 50%;">Sleep</span></span>
<span class="c num" style="left:435.5px;width:73.0px"><span style="display: inline-block; transform: scaleX(0.8471) rotate(0.03deg); transform-origin: 100% 50%;">1,035</span></span>
<span class="c" style="left:508.5px;width:117.0px"></span>
<span class="c null" style="left:625.5px;width:532.0px"><span style="display: inline-block; transform: scaleX(0.9395) rotate(0.03deg); transform-origin: 0px 50%;">[NULL]</span></span>
</div>
<div class="row" style="top:572.75px">
<span class="rn"><span style="display: inline-block; transform: scaleX(0.8639) rotate(0.03deg); transform-origin: 0px 50%;">16</span></span>
<span class="c num" style="left:51.5px;width:60.0px"><span style="display: inline-block; transform: scaleX(0.8471) rotate(0.03deg); transform-origin: 100% 50%;">1,987</span></span>
<span class="c" style="left:111.5px;width:79.0px"><span style="display: inline-block; transform: scaleX(0.9964) rotate(0.03deg); transform-origin: 0px 50%;">root</span></span>
<span class="c" style="left:190.5px;width:83.0px"><span style="display: inline-block; transform: scaleX(0.9247) rotate(0.03deg); transform-origin: 0px 50%;">localhost:59368</span></span>
<span class="c" style="left:273.5px;width:64.0px"><span style="display: inline-block; transform: scaleX(0.9283) rotate(0.03deg); transform-origin: 0px 50%;">xpt_db</span></span>
<span class="c" style="left:337.5px;width:98.0px"><span style="display: inline-block; transform: scaleX(0.8288) rotate(0.03deg); transform-origin: 0px 50%;">Sleep</span></span>
<span class="c num" style="left:435.5px;width:73.0px"><span style="display: inline-block; transform: scaleX(0.8815) rotate(0.03deg); transform-origin: 100% 50%;">6</span></span>
<span class="c" style="left:508.5px;width:117.0px"></span>
<span class="c null" style="left:625.5px;width:532.0px"><span style="display: inline-block; transform: scaleX(0.9395) rotate(0.03deg); transform-origin: 0px 50%;">[NULL]</span></span>
</div>
<div class="row odd" style="top:588.2px">
<span class="rn"><span style="display: inline-block; transform: scaleX(0.8639) rotate(0.03deg); transform-origin: 0px 50%;">17</span></span>
<span class="c num" style="left:51.5px;width:60.0px"><span style="display: inline-block; transform: scaleX(0.8471) rotate(0.03deg); transform-origin: 100% 50%;">1,988</span></span>
<span class="c" style="left:111.5px;width:79.0px"><span style="display: inline-block; transform: scaleX(0.9964) rotate(0.03deg); transform-origin: 0px 50%;">root</span></span>
<span class="c" style="left:190.5px;width:83.0px"><span style="display: inline-block; transform: scaleX(0.9247) rotate(0.03deg); transform-origin: 0px 50%;">localhost:59369</span></span>
<span class="c" style="left:273.5px;width:64.0px"><span style="display: inline-block; transform: scaleX(0.9229) rotate(0.03deg); transform-origin: 0px 50%;">cvt_db</span></span>
<span class="c" style="left:337.5px;width:98.0px"><span style="display: inline-block; transform: scaleX(0.8288) rotate(0.03deg); transform-origin: 0px 50%;">Sleep</span></span>
<span class="c num" style="left:435.5px;width:73.0px"><span style="display: inline-block; transform: scaleX(0.8471) rotate(0.03deg); transform-origin: 100% 50%;">1,026</span></span>
<span class="c" style="left:508.5px;width:117.0px"></span>
<span class="c null" style="left:625.5px;width:532.0px"><span style="display: inline-block; transform: scaleX(0.9395) rotate(0.03deg); transform-origin: 0px 50%;">[NULL]</span></span>
</div>
<div class="row" style="top:603.65px">
<span class="rn"><span style="display: inline-block; transform: scaleX(0.8639) rotate(0.03deg); transform-origin: 0px 50%;">18</span></span>
<span class="c num" style="left:51.5px;width:60.0px"><span style="display: inline-block; transform: scaleX(0.8471) rotate(0.03deg); transform-origin: 100% 50%;">1,989</span></span>
<span class="c" style="left:111.5px;width:79.0px"><span style="display: inline-block; transform: scaleX(0.9964) rotate(0.03deg); transform-origin: 0px 50%;">root</span></span>
<span class="c" style="left:190.5px;width:83.0px"><span style="display: inline-block; transform: scaleX(0.9247) rotate(0.03deg); transform-origin: 0px 50%;">localhost:59372</span></span>
<span class="c" style="left:273.5px;width:64.0px"><span style="display: inline-block; transform: scaleX(0.9283) rotate(0.03deg); transform-origin: 0px 50%;">xpt_db</span></span>
<span class="c" style="left:337.5px;width:98.0px"><span style="display: inline-block; transform: scaleX(0.8288) rotate(0.03deg); transform-origin: 0px 50%;">Sleep</span></span>
<span class="c num" style="left:435.5px;width:73.0px"><span style="display: inline-block; transform: scaleX(0.8815) rotate(0.03deg); transform-origin: 100% 50%;">2</span></span>
<span class="c" style="left:508.5px;width:117.0px"></span>
<span class="c null" style="left:625.5px;width:532.0px"><span style="display: inline-block; transform: scaleX(0.9395) rotate(0.03deg); transform-origin: 0px 50%;">[NULL]</span></span>
</div>
<div class="row odd" style="top:619.0999999999999px">
<span class="rn"><span style="display: inline-block; transform: scaleX(0.8639) rotate(0.03deg); transform-origin: 0px 50%;">19</span></span>
<span class="c num" style="left:51.5px;width:60.0px"><span style="display: inline-block; transform: scaleX(0.8471) rotate(0.03deg); transform-origin: 100% 50%;">1,990</span></span>
<span class="c" style="left:111.5px;width:79.0px"><span style="display: inline-block; transform: scaleX(0.9964) rotate(0.03deg); transform-origin: 0px 50%;">root</span></span>
<span class="c" style="left:190.5px;width:83.0px"><span style="display: inline-block; transform: scaleX(0.9247) rotate(0.03deg); transform-origin: 0px 50%;">localhost:59373</span></span>
<span class="c" style="left:273.5px;width:64.0px"><span style="display: inline-block; transform: scaleX(0.9229) rotate(0.03deg); transform-origin: 0px 50%;">cvt_db</span></span>
<span class="c" style="left:337.5px;width:98.0px"><span style="display: inline-block; transform: scaleX(0.8288) rotate(0.03deg); transform-origin: 0px 50%;">Sleep</span></span>
<span class="c num" style="left:435.5px;width:73.0px"><span style="display: inline-block; transform: scaleX(0.8471) rotate(0.03deg); transform-origin: 100% 50%;">1,015</span></span>
<span class="c" style="left:508.5px;width:117.0px"></span>
<span class="c null" style="left:625.5px;width:532.0px"><span style="display: inline-block; transform: scaleX(0.9395) rotate(0.03deg); transform-origin: 0px 50%;">[NULL]</span></span>
</div>
<div class="row" style="top:634.55px">
<span class="rn"><span style="display: inline-block; transform: scaleX(0.8639) rotate(0.03deg); transform-origin: 0px 50%;">20</span></span>
<span class="c num" style="left:51.5px;width:60.0px"><span style="display: inline-block; transform: scaleX(0.8471) rotate(0.03deg); transform-origin: 100% 50%;">1,991</span></span>
<span class="c" style="left:111.5px;width:79.0px"><span style="display: inline-block; transform: scaleX(0.9964) rotate(0.03deg); transform-origin: 0px 50%;">root</span></span>
<span class="c" style="left:190.5px;width:83.0px"><span style="display: inline-block; transform: scaleX(0.9247) rotate(0.03deg); transform-origin: 0px 50%;">localhost:59377</span></span>
<span class="c" style="left:273.5px;width:64.0px"><span style="display: inline-block; transform: scaleX(0.9283) rotate(0.03deg); transform-origin: 0px 50%;">xpt_db</span></span>
<span class="c" style="left:337.5px;width:98.0px"><span style="display: inline-block; transform: scaleX(0.8288) rotate(0.03deg); transform-origin: 0px 50%;">Sleep</span></span>
<span class="c num" style="left:435.5px;width:73.0px"><span style="display: inline-block; transform: scaleX(0.8815) rotate(0.03deg); transform-origin: 100% 50%;">0</span></span>
<span class="c" style="left:508.5px;width:117.0px"></span>
<span class="c null" style="left:625.5px;width:532.0px"><span style="display: inline-block; transform: scaleX(0.9395) rotate(0.03deg); transform-origin: 0px 50%;">[NULL]</span></span>
</div>
<div class="row odd" style="top:650.0px">
<span class="rn"><span style="display: inline-block; transform: scaleX(0.8639) rotate(0.03deg); transform-origin: 0px 50%;">21</span></span>
<span class="c num" style="left:51.5px;width:60.0px"><span style="display: inline-block; transform: scaleX(0.8471) rotate(0.03deg); transform-origin: 100% 50%;">1,992</span></span>
<span class="c" style="left:111.5px;width:79.0px"><span style="display: inline-block; transform: scaleX(0.9964) rotate(0.03deg); transform-origin: 0px 50%;">root</span></span>
<span class="c" style="left:190.5px;width:83.0px"><span style="display: inline-block; transform: scaleX(0.9247) rotate(0.03deg); transform-origin: 0px 50%;">localhost:59389</span></span>
<span class="c" style="left:273.5px;width:64.0px"><span style="display: inline-block; transform: scaleX(0.9283) rotate(0.03deg); transform-origin: 0px 50%;">xpt_db</span></span>
<span class="c" style="left:337.5px;width:98.0px"><span style="display: inline-block; transform: scaleX(0.8288) rotate(0.03deg); transform-origin: 0px 50%;">Sleep</span></span>
<span class="c num" style="left:435.5px;width:73.0px"><span style="display: inline-block; transform: scaleX(0.8815) rotate(0.03deg); transform-origin: 100% 50%;">0</span></span>
<span class="c" style="left:508.5px;width:117.0px"></span>
<span class="c null" style="left:625.5px;width:532.0px"><span style="display: inline-block; transform: scaleX(0.9395) rotate(0.03deg); transform-origin: 0px 50%;">[NULL]</span></span>
</div>
<div class="row" style="top:665.45px">
<span class="rn"><span style="display: inline-block; transform: scaleX(0.8639) rotate(0.03deg); transform-origin: 0px 50%;">22</span></span>
<span class="c num" style="left:51.5px;width:60.0px"><span style="display: inline-block; transform: scaleX(0.8471) rotate(0.03deg); transform-origin: 100% 50%;">1,993</span></span>
<span class="c" style="left:111.5px;width:79.0px"><span style="display: inline-block; transform: scaleX(0.9964) rotate(0.03deg); transform-origin: 0px 50%;">root</span></span>
<span class="c" style="left:190.5px;width:83.0px"><span style="display: inline-block; transform: scaleX(0.9247) rotate(0.03deg); transform-origin: 0px 50%;">localhost:59390</span></span>
<span class="c" style="left:273.5px;width:64.0px"><span style="display: inline-block; transform: scaleX(0.9283) rotate(0.03deg); transform-origin: 0px 50%;">xpt_db</span></span>
<span class="c" style="left:337.5px;width:98.0px"><span style="display: inline-block; transform: scaleX(0.9369) rotate(0.03deg); transform-origin: 0px 50%;">Query</span></span>
<span class="c num" style="left:435.5px;width:73.0px"><span style="display: inline-block; transform: scaleX(0.8815) rotate(0.03deg); transform-origin: 100% 50%;">1</span></span>
<span class="c" style="left:508.5px;width:117.0px"><span style="display: inline-block; transform: scaleX(0.9559) rotate(0.03deg); transform-origin: 0px 50%;">executing</span></span>
<span class="c i22" style="left:625.5px;width:532.0px"><span class="ck" style="left: 3.9px; transform: scaleX(0.8018) rotate(0.03deg); transform-origin: 0px 50%;">SELECT </span><span class="ck" style="left: 37.8px; transform: scaleX(0.9039) rotate(0.03deg); transform-origin: 0px 50%;">group_concat(MASTER_IP) </span><span class="ck" style="left: 154.5px; transform: scaleX(0.9158) rotate(0.03deg); transform-origin: 0px 50%;">INTO sTempPar </span><span class="ck" style="left: 223.8px; transform: scaleX(0.8239) rotate(0.03deg); transform-origin: 0px 50%;">FROM REPEATER </span><span class="ck" style="left: 297.8px; transform: scaleX(0.8851) rotate(0.03deg); transform-origin: 0px 50%;">where MASTER_IP&lt;&gt;</span><span class="ck" style="left: 387.8px; transform: scaleX(0.9241) rotate(0.03deg); transform-origin: 0px 50%;">'0.0.0.0' </span><span class="ck" style="left: 422.8px; transform: scaleX(0.8412) rotate(0.03deg); transform-origin: 0px 50%;">AND FIND_IN_SE</span></span>
</div>
<div class="row odd" style="top:680.9px">
<span class="rn"><span style="display: inline-block; transform: scaleX(0.8639) rotate(0.03deg); transform-origin: 0px 50%;">23</span></span>
<span class="c num" style="left:51.5px;width:60.0px"><span style="display: inline-block; transform: scaleX(0.8471) rotate(0.03deg); transform-origin: 100% 50%;">1,994</span></span>
<span class="c" style="left:111.5px;width:79.0px"><span style="display: inline-block; transform: scaleX(0.9964) rotate(0.03deg); transform-origin: 0px 50%;">root</span></span>
<span class="c" style="left:190.5px;width:83.0px"><span style="display: inline-block; transform: scaleX(0.9247) rotate(0.03deg); transform-origin: 0px 50%;">localhost:59391</span></span>
<span class="c" style="left:273.5px;width:64.0px"><span style="display: inline-block; transform: scaleX(0.9283) rotate(0.03deg); transform-origin: 0px 50%;">xpt_db</span></span>
<span class="c" style="left:337.5px;width:98.0px"><span style="display: inline-block; transform: scaleX(0.8288) rotate(0.03deg); transform-origin: 0px 50%;">Sleep</span></span>
<span class="c num" style="left:435.5px;width:73.0px"><span style="display: inline-block; transform: scaleX(0.8639) rotate(0.03deg); transform-origin: 100% 50%;">30</span></span>
<span class="c" style="left:508.5px;width:117.0px"></span>
<span class="c null" style="left:625.5px;width:532.0px"><span style="display: inline-block; transform: scaleX(0.9395) rotate(0.03deg); transform-origin: 0px 50%;">[NULL]</span></span>
</div>
<div class="row" style="top:696.3499999999999px">
<span class="rn"><span style="display: inline-block; transform: scaleX(0.8639) rotate(0.03deg); transform-origin: 0px 50%;">24</span></span>
<span class="c num" style="left:51.5px;width:60.0px"><span style="display: inline-block; transform: scaleX(0.8471) rotate(0.03deg); transform-origin: 100% 50%;">1,995</span></span>
<span class="c" style="left:111.5px;width:79.0px"><span style="display: inline-block; transform: scaleX(0.9964) rotate(0.03deg); transform-origin: 0px 50%;">root</span></span>
<span class="c" style="left:190.5px;width:83.0px"><span style="display: inline-block; transform: scaleX(0.9247) rotate(0.03deg); transform-origin: 0px 50%;">localhost:59414</span></span>
<span class="c" style="left:273.5px;width:64.0px"><span style="display: inline-block; transform: scaleX(0.9283) rotate(0.03deg); transform-origin: 0px 50%;">xpt_db</span></span>
<span class="c" style="left:337.5px;width:98.0px"><span style="display: inline-block; transform: scaleX(0.8288) rotate(0.03deg); transform-origin: 0px 50%;">Sleep</span></span>
<span class="c num" style="left:435.5px;width:73.0px"><span style="display: inline-block; transform: scaleX(0.8815) rotate(0.03deg); transform-origin: 100% 50%;">0</span></span>
<span class="c" style="left:508.5px;width:117.0px"></span>
<span class="c null" style="left:625.5px;width:532.0px"><span style="display: inline-block; transform: scaleX(0.9395) rotate(0.03deg); transform-origin: 0px 50%;">[NULL]</span></span>
</div>
<div class="abs" style="left:52px;top:710.8px;width:1146px;height:1px;background:#ececec"></div>
<div class="abs" style="left:20px;top:726.85px;width:31.5px;height:1px;background:#8f8f8f"></div>
<div class="abs" style="left:52px;top:726.25px;width:1146px;height:1px;background:#ececec"></div>
<div class="abs" style="left:1158px;top:355.45px;width:40px;height:1px;background:#ececec"></div>
<div class="abs" style="left:1158px;top:370.9px;width:40px;height:1px;background:#ececec"></div>
<div class="abs" style="left:1158px;top:386.35px;width:40px;height:1px;background:#ececec"></div>
<div class="abs" style="left:1158px;top:401.8px;width:40px;height:1px;background:#ececec"></div>
<div class="abs" style="left:1158px;top:417.25px;width:40px;height:1px;background:#ececec"></div>
<div class="abs" style="left:1158px;top:432.7px;width:40px;height:1px;background:#ececec"></div>
<div class="abs" style="left:1158px;top:448.15px;width:40px;height:1px;background:#ececec"></div>
<div class="abs" style="left:1158px;top:463.6px;width:40px;height:1px;background:#ececec"></div>
<div class="abs" style="left:1158px;top:479.04999999999995px;width:40px;height:1px;background:#ececec"></div>
<div class="abs" style="left:1158px;top:494.5px;width:40px;height:1px;background:#ececec"></div>
<div class="abs" style="left:1158px;top:509.95px;width:40px;height:1px;background:#ececec"></div>
<div class="abs" style="left:1158px;top:525.4px;width:40px;height:1px;background:#ececec"></div>
<div class="abs" style="left:1158px;top:540.85px;width:40px;height:1px;background:#ececec"></div>
<div class="abs" style="left:1158px;top:556.3px;width:40px;height:1px;background:#ececec"></div>
<div class="abs" style="left:1158px;top:571.75px;width:40px;height:1px;background:#ececec"></div>
<div class="abs" style="left:1158px;top:587.2px;width:40px;height:1px;background:#ececec"></div>
<div class="abs" style="left:1158px;top:602.65px;width:40px;height:1px;background:#ececec"></div>
<div class="abs" style="left:1158px;top:618.0999999999999px;width:40px;height:1px;background:#ececec"></div>
<div class="abs" style="left:1158px;top:633.55px;width:40px;height:1px;background:#ececec"></div>
<div class="abs" style="left:1158px;top:649.0px;width:40px;height:1px;background:#ececec"></div>
<div class="abs" style="left:1158px;top:664.45px;width:40px;height:1px;background:#ececec"></div>
<div class="abs" style="left:1158px;top:679.9px;width:40px;height:1px;background:#ececec"></div>
<div class="abs" style="left:1158px;top:695.3499999999999px;width:40px;height:1px;background:#ececec"></div>
<div class="abs" style="left:1158px;top:710.8px;width:40px;height:1px;background:#ececec"></div>
<div class="abs" style="left:111.0px;top:341px;width:1px;height:396px;background:rgba(255,255,255,0.55)"></div>
<div class="abs" style="left:111.0px;top:341px;width:1px;height:396px;background:rgba(200,200,200,0.25)"></div>
<div class="abs" style="left:190.0px;top:341px;width:1px;height:396px;background:rgba(255,255,255,0.55)"></div>
<div class="abs" style="left:190.0px;top:341px;width:1px;height:396px;background:rgba(200,200,200,0.25)"></div>
<div class="abs" style="left:273.0px;top:341px;width:1px;height:396px;background:rgba(255,255,255,0.55)"></div>
<div class="abs" style="left:273.0px;top:341px;width:1px;height:396px;background:rgba(200,200,200,0.25)"></div>
<div class="abs" style="left:337.0px;top:341px;width:1px;height:396px;background:rgba(255,255,255,0.55)"></div>
<div class="abs" style="left:337.0px;top:341px;width:1px;height:396px;background:rgba(200,200,200,0.25)"></div>
<div class="abs" style="left:435.0px;top:341px;width:1px;height:396px;background:rgba(255,255,255,0.55)"></div>
<div class="abs" style="left:435.0px;top:341px;width:1px;height:396px;background:rgba(200,200,200,0.25)"></div>
<div class="abs" style="left:508.0px;top:341px;width:1px;height:396px;background:rgba(255,255,255,0.55)"></div>
<div class="abs" style="left:508.0px;top:341px;width:1px;height:396px;background:rgba(200,200,200,0.25)"></div>
<div class="abs" style="left:625.0px;top:341px;width:1px;height:396px;background:rgba(255,255,255,0.55)"></div>
<div class="abs" style="left:625.0px;top:341px;width:1px;height:396px;background:rgba(200,200,200,0.25)"></div>
<div class="abs" style="left:1157.0px;top:341px;width:1px;height:396px;background:rgba(255,255,255,0.55)"></div>
<div class="abs" style="left:1157.0px;top:341px;width:1px;height:396px;background:rgba(200,200,200,0.25)"></div>
<div class="abs" style="left:51.5px;top:340.5px;width:1106px;height:1.1px;background:#8c8c8c"></div>
<div class="abs" style="left:20px;top:340.5px;width:31.5px;height:1px;background:#9a9a9a"></div>
<div class="abs" style="left:51px;top:341px;width:1px;height:396px;background:#707070"></div>
</div>
<div class="abs" style="left:20.5px;top:20px;width:10px;height:250px;background:#fafafa"></div>
<svg class="abs" style="left:6.5px;top:26px" width="7" height="10" viewBox="0 0 7 10"><path d="M0.3 0.3L6.5 5L0.3 9.7Z" fill="#d9534f"></path></svg>
<svg class="abs" style="left:6.5px;top:44px" width="10" height="11" viewBox="0 0 10 11"><path d="M0.3 0.3L6.2 4.7L0.3 9.2Z" fill="#d9534f"></path><path d="M7.2 6V10M5.2 8H9.2" stroke="#444" stroke-width="0.9"></path></svg>
<svg class="abs" style="left:3.5px;top:60.5px" width="13" height="12" viewBox="0 0 13 12"><path d="M3.2 9V1.2H11.5" stroke="#d9534f" stroke-width="1.5" fill="none"></path><path d="M10.3 1.2V9.5" stroke="#d9534f" stroke-width="1.5" fill="none"></path><path d="M0.3 10.5H9.5" stroke="#d9534f" stroke-width="1.6" fill="none"></path><path d="M5.2 3L8.6 5.5L5.2 8Z" fill="#d9534f"></path></svg>
<svg class="abs" style="left:3.5px;top:78.5px" width="13" height="12" viewBox="0 0 13 12"><path d="M3.2 9V1.2H11.5" stroke="#2a86d0" stroke-width="1.4" fill="none"></path><path d="M10.3 1.2V9.5" stroke="#2a86d0" stroke-width="1.2" fill="none"></path><path d="M0.3 10.5H9.5" stroke="#2a86d0" stroke-width="1.6" fill="none"></path><path d="M5 3.2H9M5 5.2H9M5 7.2H9M6.3 2.5V8M8 2.5V8" stroke="#777" stroke-width="0.8"></path></svg>
<svg class="abs" style="left:4px;top:96px" width="12" height="12" viewBox="0 0 12 12"><rect x="0.7" y="0.7" width="10.6" height="10.6" fill="#fff" stroke="#2a86d0" stroke-width="1.4"></rect><rect x="0.7" y="0.7" width="10.6" height="2.4" fill="#2a86d0"></rect><path d="M3 4.8L5.5 6.8L3 8.8M6.5 9H9.5" stroke="#2a86d0" stroke-width="1.1" fill="none"></path></svg>
<svg class="abs" style="left:20.8px;top:62px" width="9" height="8" viewBox="0 0 9 8"><path d="M4.5 0.6L8.5 7.4H0.5Z" fill="#fff" stroke="#d9534f" stroke-width="0.9"></path><path d="M4.5 2.8V5.2M4.5 5.9V6.6" stroke="#d9534f" stroke-width="0.9"></path></svg>
<svg class="abs" style="left:20.8px;top:74.3px" width="9" height="8" viewBox="0 0 9 8"><path d="M4.5 0.6L8.5 7.4H0.5Z" fill="#fff" stroke="#d9534f" stroke-width="0.9"></path><path d="M4.5 2.8V5.2M4.5 5.9V6.6" stroke="#d9534f" stroke-width="0.9"></path></svg>
<svg class="abs" style="left:3.5px;top:176.5px" width="12" height="12" viewBox="0 0 12 12"><g transform="translate(6 6)"><circle r="4.7" fill="#2a86d0"></circle><rect x="-1.7" y="-6" width="3.4" height="3" rx="0.6" fill="#2a86d0" transform="rotate(0)"></rect><rect x="-1.7" y="-6" width="3.4" height="3" rx="0.6" fill="#2a86d0" transform="rotate(60)"></rect><rect x="-1.7" y="-6" width="3.4" height="3" rx="0.6" fill="#2a86d0" transform="rotate(120)"></rect><rect x="-1.7" y="-6" width="3.4" height="3" rx="0.6" fill="#2a86d0" transform="rotate(180)"></rect><rect x="-1.7" y="-6" width="3.4" height="3" rx="0.6" fill="#2a86d0" transform="rotate(240)"></rect><rect x="-1.7" y="-6" width="3.4" height="3" rx="0.6" fill="#2a86d0" transform="rotate(300)"></rect><circle r="1.4" fill="#69ade4"></circle></g></svg>
<svg class="abs" style="left:3px;top:199px" width="12" height="2" viewBox="0 0 12 2"><rect x="0.5" y="0.4" width="1.3" height="1.2" fill="#a5a5a5"></rect><rect x="3.7" y="0.4" width="1.3" height="1.2" fill="#a5a5a5"></rect><rect x="6.9" y="0.4" width="1.3" height="1.2" fill="#a5a5a5"></rect><rect x="10.1" y="0.4" width="1.3" height="1.2" fill="#a5a5a5"></rect></svg>
<svg class="abs" style="left:5px;top:212.5px" width="11" height="12" viewBox="0 0 11 12"><path d="M0.7 0.7H6.5L9.3 3.5V11.3H0.7Z" fill="#fff" stroke="#2a86d0" stroke-width="1.2"></path><path d="M3 6.5H7" stroke="#2a86d0" stroke-width="1"></path><path d="M6.8 4.2L10 6.5L6.8 8.8Z" fill="#2a86d0"></path></svg>
<svg class="abs" style="left:5px;top:231px" width="12" height="12" viewBox="0 0 12 12"><path d="M0.7 0.7H6.5L9.3 3.5V11.3H0.7Z" fill="#fff" stroke="#2a86d0" stroke-width="1.2"></path><rect x="6.2" y="6.8" width="5" height="5" fill="#d9534f"></rect></svg>
<svg class="abs" style="left:5px;top:248.8px" width="11" height="12" viewBox="0 0 11 12"><path d="M0.7 0.7H6.5L9.3 3.5V11.3H0.7Z" fill="#fff" stroke="#6a93b8" stroke-width="1.2"></path><path d="M3.3 5L2.4 7L3.3 9M6.7 5L7.6 7L6.7 9M4.3 6L5.7 8M5.7 6L4.3 8" stroke="#2a86d0" stroke-width="0.8" fill="none"></path></svg>
<div class="abs" style="left:2px;top:319px;width:15.5px;height:51.5px;background:#e6e6e6;border:1px solid #cfcfcf"></div>
<div class="abs vt" style="left:4px;top:349.5px">网格</div>
<svg class="abs" style="left:4.5px;top:352.5px" width="11" height="12" viewBox="0 0 11 12"><rect x="0.7" y="0.7" width="9.6" height="10.6" fill="#f4f9fd" stroke="#2a86d0" stroke-width="1.4"></rect><path d="M3.9 0.7V11.3M7.1 0.7V11.3M0.7 4.2H10.3M0.7 7.8H10.3" stroke="#2a86d0" stroke-width="1"></path></svg>
<svg class="abs" style="left:5px;top:403.5px" width="10" height="13" viewBox="0 0 10 13"><path d="M1.5 0.8V8" stroke="#2a86d0" stroke-width="1.1"></path><path d="M1.5 4.1H8.5" stroke="#5a8fc0" stroke-width="1"></path><rect x="7.6" y="3.4" width="1.4" height="1.4" fill="#2a86d0"></rect><path d="M4.2 8.6L6.1 6.8L8 8.6ZM4.2 10.2L6.1 12.2L8 10.2Z" fill="#2a86d0"></path></svg>
<div class="abs vt" style="left:4px;top:715.5px">记录</div>
<svg class="abs" style="left:4px;top:718px" width="13" height="12" viewBox="0 0 13 12"><path d="M0.8 4.5H3.5V2.8H7V4.5H11V11.2H0.8Z" fill="#fff" stroke="#2a86d0" stroke-width="1.3"></path><circle cx="9.8" cy="2.6" r="2.1" fill="#2a86d0"></circle></svg>
<svg class="abs" style="left:41px;top:326px" width="6" height="8" viewBox="0 0 6 8"><rect x="0.3" y="3" width="5.4" height="4.8" rx="0.8" fill="#d9534f"></rect><path d="M1.5 3.2V2A1.5 1.5 0 0 1 4.5 2V3.2" stroke="#e9a19e" stroke-width="0.9" fill="none"></path></svg>
<div class="abs" style="left:49.3px;top:661.2px;width:1110.7px;height:20.7px;border:3px solid #d9605c;border-radius:1.5px"></div>
<div class="abs" style="left: 1034px; top: 704.5px; font-size: 20.5px; line-height: 30px; color: rgb(185, 185, 185); white-space: nowrap; letter-spacing: 0px; transform: scaleX(1.0048) rotate(0.03deg); transform-origin: 0px 50%;">CSDN @</div>
<div class="abs" style="left: 1119.5px; top: 703.5px; font-size: 23px; font-weight: 300; line-height: 30px; color: rgb(180, 180, 180); white-space: nowrap; letter-spacing: 0px; transform: scaleX(1.0081) rotate(0.03deg); transform-origin: 0px 50%;">刘大猫.</div>


</body></html>
